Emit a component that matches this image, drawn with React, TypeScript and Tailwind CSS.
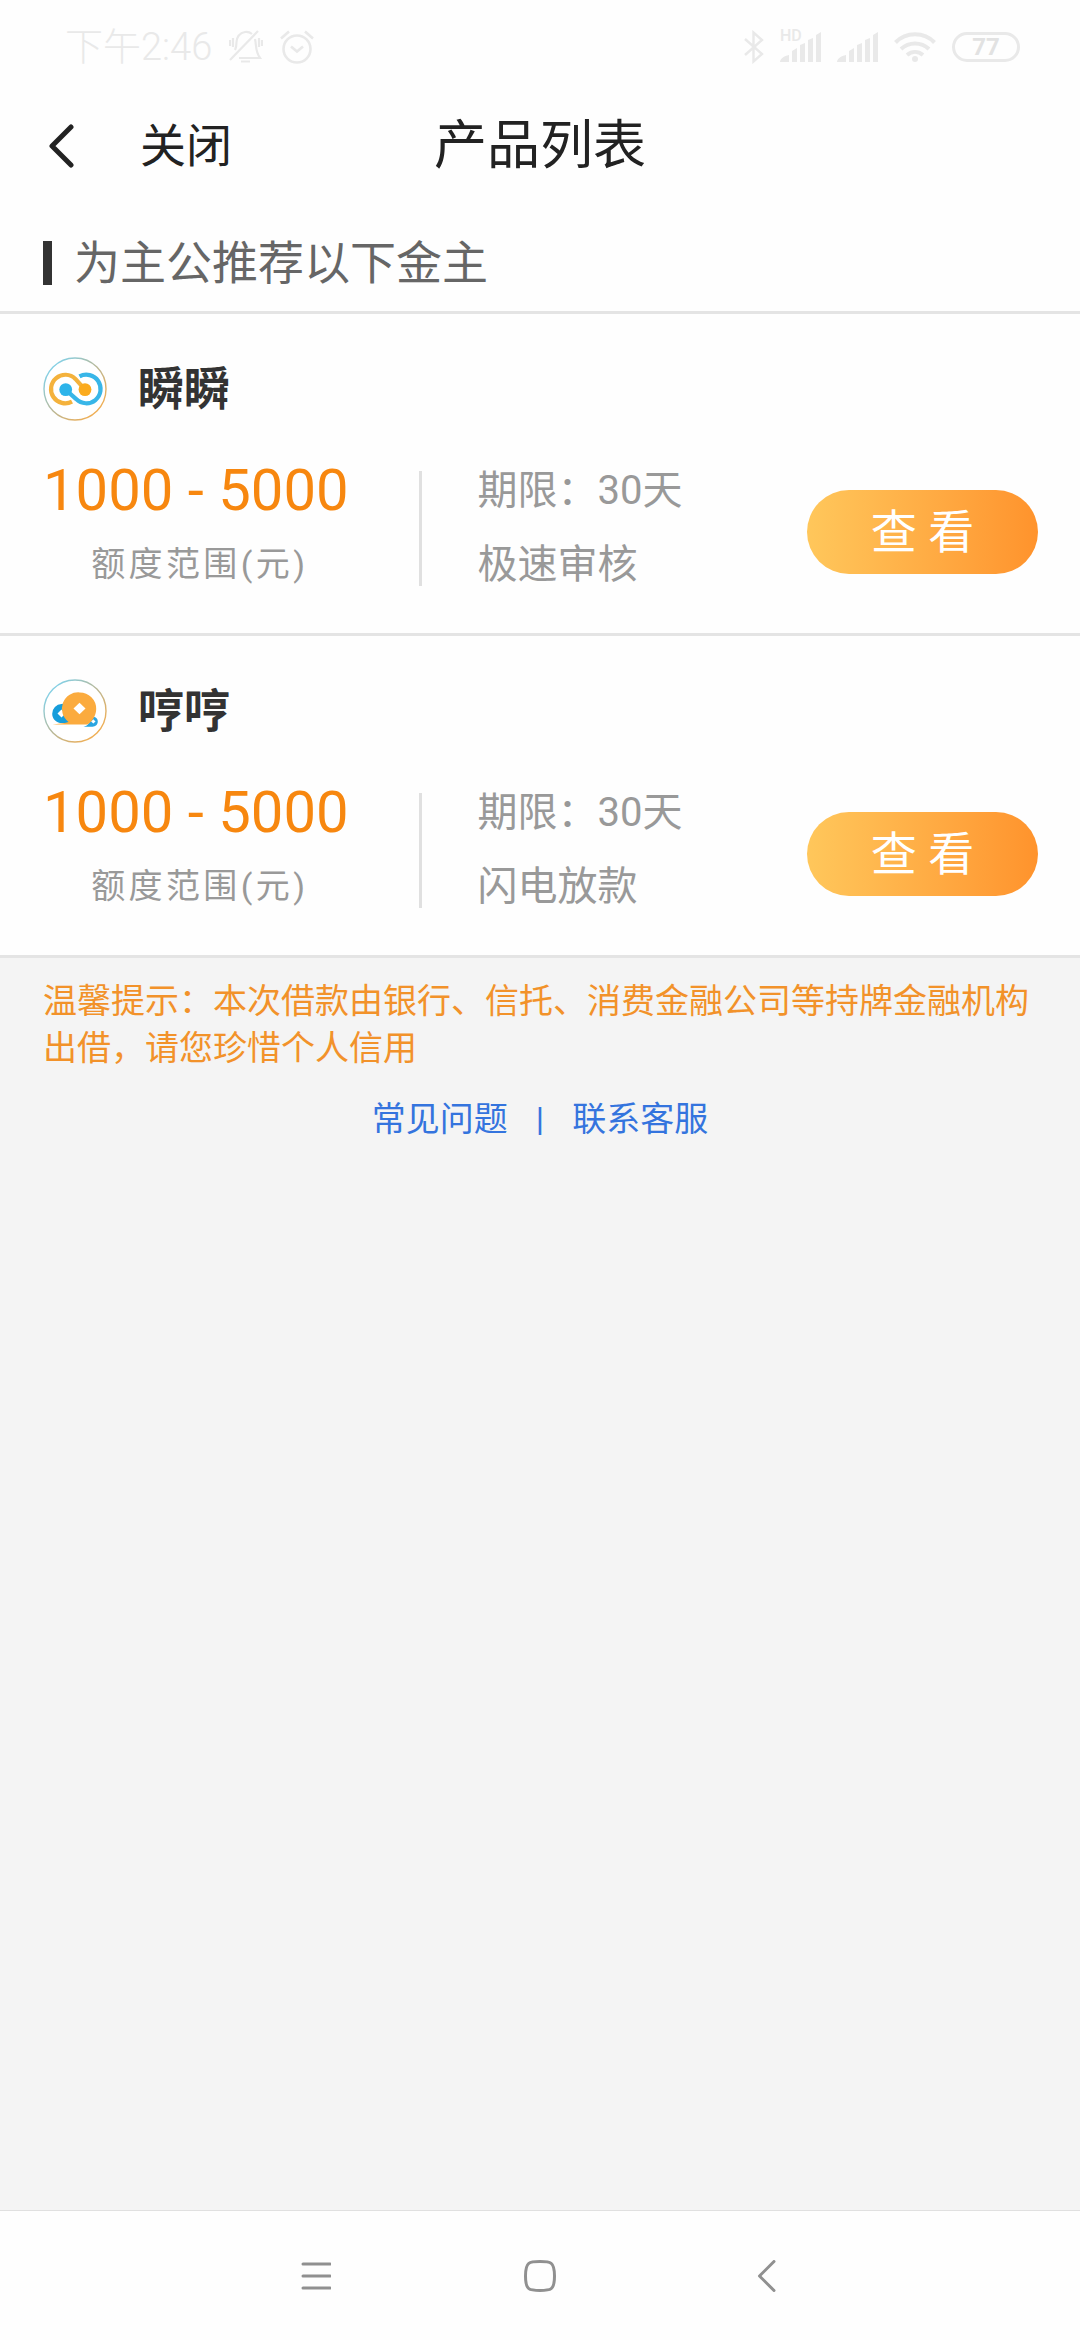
import type { ReactNode } from 'react';

interface Product {
  name: string;
  range: string;
  term: string;
  feature: string;
  logo: ReactNode;
}

function LogoRing({ id, children }: { id: string; children: ReactNode }) {
  return (
    <svg viewBox="0 0 64 64" className="size-16 flex-shrink-0" aria-hidden="true">
      <defs>
        <linearGradient id={id} x1="0" y1="0" x2="1" y2="1">
          <stop offset="0.1" stopColor="#7fd3ee" />
          <stop offset="0.5" stopColor="#b9b796" />
          <stop offset="0.9" stopColor="#f6ad4c" />
        </linearGradient>
      </defs>
      <circle cx="32" cy="32" r="31" fill="#fff" stroke={`url(#${id})`} strokeWidth="1.4" />
      {children}
    </svg>
  );
}

function ShunLogo() {
  return (
    <LogoRing id="ring-shun">
      <g fill="none" strokeWidth="4.2">
        <path d="M29 44.7A14.3 14.3 0 1 1 32.4 21.9L42 32.7" stroke="#f4b23c" />
        <path d="M36.5 19.4A14.3 14.3 0 1 1 33.2 42.1L22.7 32.7" stroke="#38b6e8" />
      </g>
      <circle cx="22.7" cy="32.6" r="6.4" fill="#2db4ea" />
      <circle cx="42" cy="32.6" r="6.4" fill="#fbab1e" />
    </LogoRing>
  );
}

function HengLogo() {
  return (
    <LogoRing id="ring-heng">
      <path d="M18.5 25a9.8 9.8 0 0 0-9.3 9.8c0 4.6 3.2 8.2 7.8 9.2h12V26c-3-1-7-1.4-10.5-1z" fill="#169ddb" />
      <path d="M18.5 30.5l4 4-4 4-4-4z" fill="#fff" />
      <path d="M50.5 37.8a4.6 4.6 0 0 1 4.3 4.8c0 3-2.3 5.2-5.3 5.2h-9c2-.6 4-1.4 5-3z" fill="#2aa5e0" />
      <path d="M50.3 40.2l2.2 2.2-2.2 2.2-2.2-2.2z" fill="#fff" />
      <path d="M36.8 13.4a16.4 16.4 0 0 1 16.4 16.4c0 6-2.8 11-7.2 14.6-1.2.9-2.5 1.100-4 1.100H9.5c5-1.200 11.500-.8 16-2.600a16.400 16.400 0 0 1 11.300-29.500z" fill="#fbab3e" />
      <path d="M36.5 23.8l6 5.7-6 5.7-6-5.7z" fill="#fff" />
    </LogoRing>
  );
}

const products: Product[] = [
  { name: '瞬瞬', range: '1000 - 5000', term: '期限：30天', feature: '极速审核', logo: <ShunLogo /> },
  { name: '哼哼', range: '1000 - 5000', term: '期限：30天', feature: '闪电放款', logo: <HengLogo /> },
];

function SignalBars() {
  return (
    <svg viewBox="0 0 41 30" className="h-[30px] w-[41px]" fill="currentColor" aria-hidden="true">
      <path d="M0 30c0-3 4-6 9-7v7zM12 30V19l5-3v14zM20 30V13l5-2v19zM28 30V8l5-2v24zM36 30V3l5-3v30z" />
    </svg>
  );
}

function StatusBar() {
  return (
    <div className="flex h-[94px] items-center justify-between pr-[60px] pl-[65px] text-[#e9e9e9]">
      <div className="flex items-center gap-[17px]">
        <span className="text-[38px] leading-[40px] font-light">下午2:46</span>
        <svg viewBox="0 0 34 34" className="size-[34px]" fill="none" stroke="currentColor" strokeWidth="2.2" aria-hidden="true">
          <path d="M1 30L29 1" />
          <path d="M6 20c1.500-3 1.500-5 1.500-8C8 6 11 3 16 2c3-.4 5 .3 7 2M26 9c1.500 6 0 12 5 19H10" />
          <path d="M12 31.500h9M1 10v6M4 8v9M30 8v9M33 10v6" />
        </svg>
        <svg viewBox="0 0 34 34" className="size-[34px]" fill="none" stroke="currentColor" strokeWidth="2.6" aria-hidden="true">
          <circle cx="17" cy="19" r="13.5" />
          <path d="M11 16.500l6 5 6-5M1 8.500L9 1.500M33 8.500l-8-7" />
        </svg>
      </div>
      <div className="flex items-center gap-4">
        <svg viewBox="0 0 20 34" className="h-[34px] w-5" fill="none" stroke="currentColor" strokeWidth="2.4" aria-hidden="true">
          <path d="M1 9l17 15-8.500 7.500V2.500L18 10 1 25" />
        </svg>
        <div className="relative">
          <SignalBars />
          <span className="absolute -top-1 left-0 text-[16px] leading-[16px] font-medium">HD</span>
        </div>
        <SignalBars />
        <svg viewBox="0 0 42 30" className="h-[30px] w-[42px]" fill="none" stroke="currentColor" strokeWidth="4" aria-hidden="true">
          <path d="M1.500 10.500C12-.5 30-.5 40.500 10.500M7 17c8-7.500 20-7.500 28 0M13 23c5-4 11-4 16 0" />
          <circle cx="21" cy="27" r="3" fill="currentColor" stroke="none" />
        </svg>
        <div className="flex h-[30px] w-[68px] items-center justify-center rounded-full border-[3px] border-[#e9e9e9] text-[24px] leading-[24px] font-bold text-[#e2e2e2]">
          77
        </div>
      </div>
    </div>
  );
}

function ProductCard({ product }: { product: Product }) {
  return (
    <li className="border-b-[3px] border-[#e4e4e4] pt-[43px] pr-[42px] pb-[31px] pl-[43px]">
      <div className="flex items-center gap-[31px]">
        {product.logo}
        <h3 className="text-[46px] leading-[64px] font-bold text-[#333]">{product.name}</h3>
      </div>

      <div className="mt-[33px] flex items-center">
        <div className="text-center">
          <p className="text-[58px] leading-[72px] text-[#f7870f]">{product.range}</p>
          <p className="pl-2 text-[34px] leading-[76px] tracking-widest text-[#999]">额度范围(元)</p>
        </div>
        <div className="ml-[70px] h-[115px] w-[3px] bg-[#e0e0e0]" />
        <div className="ml-14 flex-1 text-[40px] leading-[74px] text-[#999]">
          <p>{product.term}</p>
          <p>{product.feature}</p>
        </div>
        <button
          type="button"
          className="mt-2 h-[84px] w-[231px] rounded-full bg-linear-to-r from-[#ffc75b] to-[#ff932c] text-[46px] leading-[64px] text-white"
        >
          查 看
        </button>
      </div>
    </li>
  );
}

export default function App() {
  return (
    <div
      lang="zh-CN"
      className="flex min-h-screen flex-col bg-[#f4f4f4] font-[Roboto,'Noto_Sans_CJK_SC',sans-serif]"
    >
      <div className="bg-[#fefefe]">
        <StatusBar />

        {/* Title bar */}
        <header className="grid h-[104px] grid-cols-3 items-center px-11 text-[#222]">
          <div className="flex items-center gap-16">
            <button type="button" aria-label="返回">
              <svg viewBox="0 0 32 44" className="h-11 w-8" fill="none" stroke="currentColor" strokeWidth="5" strokeLinecap="round" strokeLinejoin="round" aria-hidden="true">
                <path d="M27 3L8 22l19 19" />
              </svg>
            </button>
            <button type="button" className="text-[46px] leading-[64px]">关闭</button>
          </div>
          <h1 className="text-center text-[53px] leading-[64px]">产品列表</h1>
        </header>

        <div className="border-b-[3px] border-[#e4e4e4] px-[43px] pt-4">
          <div className="flex h-[97px] items-center gap-[22px]">
            <span className="h-11 w-[9px] bg-[#333]" />
            <h2 className="text-[46px] leading-[64px] text-[#666]">为主公推荐以下金主</h2>
          </div>
        </div>

        <ul>
          {products.map((product) => (
            <ProductCard key={product.name} product={product} />
          ))}
        </ul>
      </div>

      <main className="flex-1 px-[43px] pt-5 text-[34px] leading-[47px]">
        <p className="text-[#f2922a]">
          温馨提示：本次借款由银行、信托、消费金融公司等持牌金融机构出借，请您珍惜个人信用
        </p>
        <div className="mt-6 flex justify-center gap-7 text-[#3474de]">
          <a href="#faq">常见问题</a>
          <span>|</span>
          <a href="#service">联系客服</a>
        </div>
      </main>

      {/* System navigation */}
      <nav className="flex h-[130px] items-center justify-center border-t border-[#e0e0e0] bg-[#fefefe] text-[#909090]">
        <button type="button" aria-label="菜单" className="flex w-[225px] justify-center">
          <svg viewBox="0 0 32 32" className="size-8" fill="none" stroke="currentColor" strokeWidth="3" strokeLinecap="round" aria-hidden="true">
            <path d="M4 4h27M4 16h27M4 28h27" />
          </svg>
        </button>
        <button type="button" aria-label="主页" className="flex w-[225px] justify-center">
          <svg viewBox="0 0 32 32" className="size-8" fill="none" stroke="currentColor" strokeWidth="3" aria-hidden="true">
            <path d="M16 1.500c10.500 0 14.500 0 14.500 14.500S26.500 30.500 16 30.500 1.500 30.500 1.500 16 5.500 1.500 16 1.500z" />
          </svg>
        </button>
        <button type="button" aria-label="后退" className="flex w-[225px] justify-center">
          <svg viewBox="0 0 32 32" className="size-8" fill="none" stroke="currentColor" strokeWidth="3" strokeLinecap="round" strokeLinejoin="round" aria-hidden="true">
            <path d="M25 1.500L10.500 16 25 30.500" />
          </svg>
        </button>
      </nav>
    </div>
  );
}
